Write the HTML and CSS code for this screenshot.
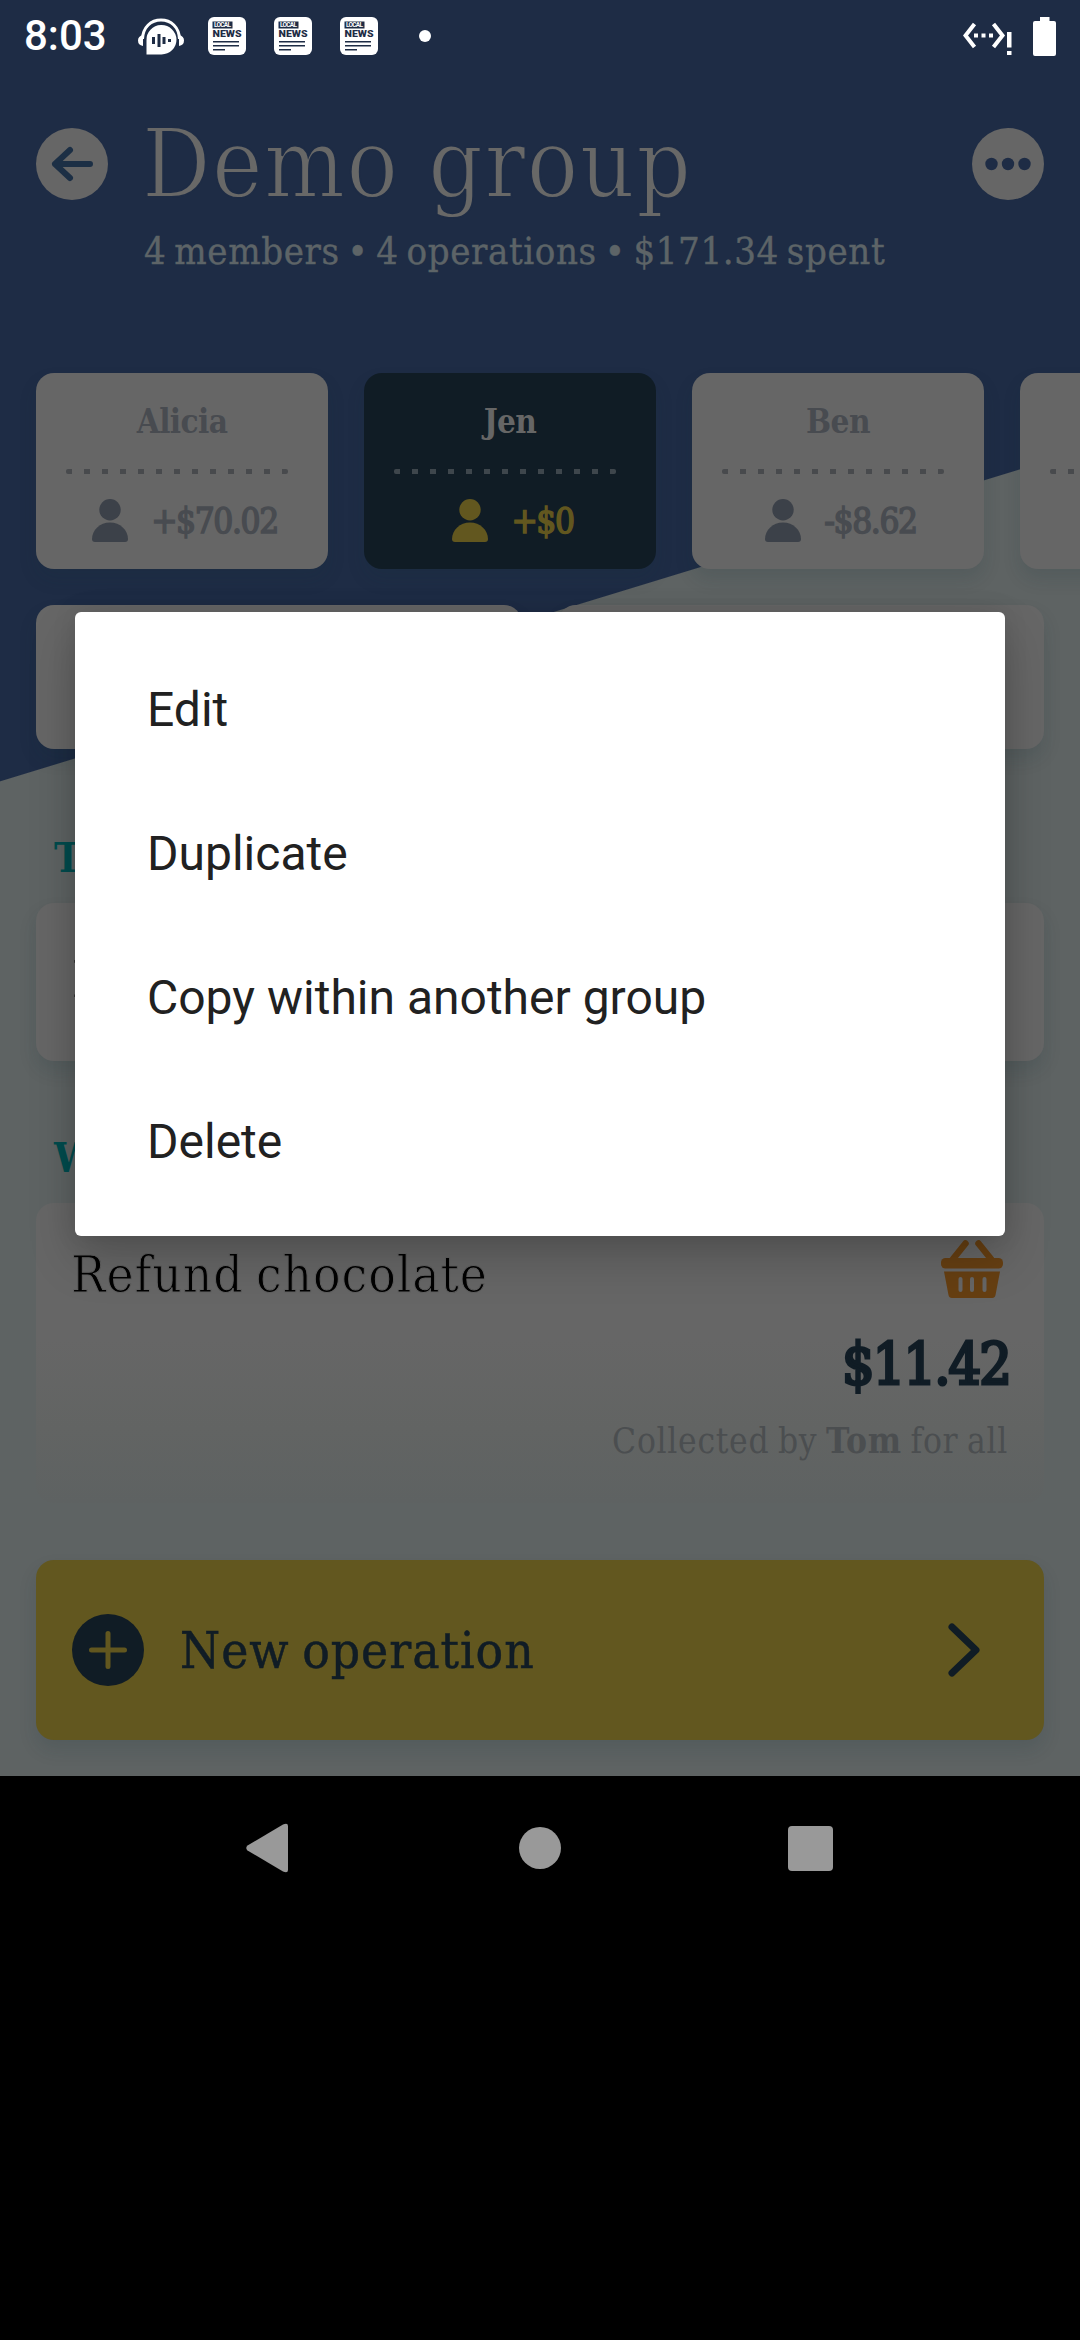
FILE: index.html
```html
<!DOCTYPE html>
<html lang="en">
<head>
<meta charset="utf-8">
<title>Demo group</title>
<link rel="stylesheet" href="styles.css">
</head>
<body>
<svg width="0" height="0" class="defs">
  <symbol id="person" viewBox="0 0 36 43"><circle cx="18" cy="10.700" r="10.700"/><path d="M0 40C0 31 8 23.500 18 23.500S36 31 36 40Q36 43 33 43H3Q0 43 0 40Z"/></symbol>
</svg>
<div class="screen">
  <header class="status">
    <span class="time">8:03</span>
    <svg class="headset" width="46" height="37" viewBox="0 0 46 37">
      <path d="M8.500 36.500V22.500A15 14.700 0 1 1 23.500 36.500Z" fill="#fff"/>
      <path d="M4.500 21C5 9 13 2 23 2S41 9 41.500 21" fill="none" stroke="#fff" stroke-width="3"/>
      <path d="M5 17Q0 18 0 22.500T5 28ZM41 17Q46 18 46 22.500T41 28Z" fill="#fff"/>
      <path d="M15.500 19V26M21 16V29M26 19V26M31.500 21V24" stroke="#1e2c45" stroke-width="3"/>
    </svg>
    <svg class="news" width="38" height="38" viewBox="0 0 38 38">
      <rect width="38" height="38" rx="6" fill="#fff"/><rect x="4.500" y="4.500" width="20" height="7" fill="#1e2c45"/>
      <text x="6" y="10.400" class="news-local" textLength="17">LOCAL</text><text x="4.500" y="20.400" class="news-title" textLength="29" lengthAdjust="spacingAndGlyphs">NEWS</text>
      <path d="M5 24.700H31M5 28.700H31M5 32.700H17" stroke="#1e2c45" stroke-width="1.400"/>
    </svg>
    <svg class="news" width="38" height="38" viewBox="0 0 38 38">
      <rect width="38" height="38" rx="6" fill="#fff"/><rect x="4.500" y="4.500" width="20" height="7" fill="#1e2c45"/>
      <text x="6" y="10.400" class="news-local" textLength="17">LOCAL</text><text x="4.500" y="20.400" class="news-title" textLength="29" lengthAdjust="spacingAndGlyphs">NEWS</text>
      <path d="M5 24.700H31M5 28.700H31M5 32.700H17" stroke="#1e2c45" stroke-width="1.400"/>
    </svg>
    <svg class="news" width="38" height="38" viewBox="0 0 38 38">
      <rect width="38" height="38" rx="6" fill="#fff"/><rect x="4.500" y="4.500" width="20" height="7" fill="#1e2c45"/>
      <text x="6" y="10.400" class="news-local" textLength="17">LOCAL</text><text x="4.500" y="20.400" class="news-title" textLength="29" lengthAdjust="spacingAndGlyphs">NEWS</text>
      <path d="M5 24.700H31M5 28.700H31M5 32.700H17" stroke="#1e2c45" stroke-width="1.400"/>
    </svg>
    <i class="more-dot"></i>
    <svg class="net" width="50" height="34" viewBox="0 0 50 34">
      <path d="M11.500 2L2.500 13.500L11.500 25M30.500 2L39.500 13.500L30.500 25" fill="none" stroke="#fff" stroke-width="4"/>
      <path d="M11 11.500h4v4h-4zM18.500 11.500h4v4h-4zM26 11.500h4v4h-4zM44 10h4.500v15.500H44zM44 29h4.500v4H44z" fill="#fff"/>
    </svg>
    <svg width="23" height="39" viewBox="0 0 23 39"><path d="M7 0H16.500V4H21Q23 4 23 6V37Q23 39 21 39H2Q0 39 0 37V6Q0 4 2 4H7Z" fill="#fff"/></svg>
  </header>

  <div class="heading">
    <svg width="72" height="72" viewBox="0 0 72 72"><circle cx="36" cy="36" r="36" fill="#666"/><path d="M54 36H19M34 22L19 36L34 50" class="stroke arrow"/></svg>
    <div class="heading-text">
      <h1>Demo group</h1>
      <p>4 members • 4 operations • $171.34 spent</p>
    </div>
    <svg width="72" height="72" viewBox="0 0 72 72"><circle cx="36" cy="36" r="36" fill="#666"/><g fill="#1e2c45"><circle cx="19.500" cy="36" r="6.200"/><circle cx="36" cy="36" r="6.200"/><circle cx="52.500" cy="36" r="6.200"/></g></svg>
  </div>

  <div class="members">
    <article class="member"><h2>Alicia</h2><i class="dots"></i><div class="balance"><svg width="36" height="43"><use href="#person"/></svg><span>+$70.02</span></div></article>
    <article class="member active"><h2>Jen</h2><i class="dots"></i><div class="balance"><svg width="36" height="43"><use href="#person"/></svg><span>+$0</span></div></article>
    <article class="member"><h2>Ben</h2><i class="dots"></i><div class="balance"><svg width="36" height="43"><use href="#person"/></svg><span>-$8.62</span></div></article>
    <article class="member"><h2></h2><i class="dots"></i></article>
  </div>

  <div class="actions"><div class="panel"></div><div class="panel"></div></div>

  <h3 class="day first">T</h3>
  <div class="panel operation compact"><span>I</span></div>
  <h3 class="day">W</h3>
  <div class="panel operation fading">
    <div class="op-head"><span>Refund chocolate</span>
      <svg width="62" height="58" viewBox="0 0 62 58">
        <path d="M24.500 3.500L12 19M37.500 3.500L50 19" stroke="#663f12" stroke-width="6.500" stroke-linecap="round"/>
        <rect y="18" width="62" height="10.500" rx="4.500" fill="#663f12"/>
        <path d="M3 31.500H59L54.500 55Q54 58 51 58H11Q8 58 7.500 55Z" fill="#663f12"/>
        <path d="M19.500 39V50M31 39V50M43.500 39V50" stroke="#666" stroke-width="4" stroke-linecap="round"/>
      </svg>
    </div>
    <div class="amount">$11.42</div>
    <div class="payer">Collected by <b>Tom</b> for all</div>
  </div>

  <div class="new-op">
    <svg width="72" height="72" viewBox="0 0 72 72"><circle cx="36" cy="36" r="36" fill="#101c25"/><path d="M36 19.500V52.500M19.500 36H52.500" class="plus"/></svg>
    <span>New operation</span>
    <svg width="32" height="54" viewBox="0 0 32 54"><path d="M4 4L28 27L4 50" class="stroke chevron"/></svg>
  </div>
  <div class="dialog">
    <div>Edit</div><div>Duplicate</div><div>Copy within another group</div><div>Delete</div>
  </div>
</div>
<nav class="nav">
  <svg width="44" height="50" viewBox="0 0 44 50"><path d="M2.500 22.500L38 1.500Q43 -.5 43 3V47Q43 50.500 38 48.500L2.500 27.500Q0 25 2.500 22.500Z" fill="#999"/></svg>
  <i class="home"></i>
  <i class="recent"></i>
</nav>
</body>
</html>
```

FILE: styles.css
```css
* { box-sizing: border-box; margin: 0; }
body { width: 1080px; height: 2340px; background: #000; overflow: hidden; font-family: "Roboto Slab", "DejaVu Serif Condensed", "DejaVu Serif", serif; }
svg { display: block; flex: none; }
.defs { position: absolute; }
.screen {
  position: relative; height: 1776px; display: flex; flex-direction: column; overflow: hidden;
  background: linear-gradient(162.99deg, #1e2c45 0, #1e2c45 746.700px, #5e6363 747.700px);
}

.status { height: 72px; padding: 0 24px; display: flex; align-items: center; color: #fff; }
.time { font: 500 42px/76px Roboto, sans-serif; width: 114px; }
.headset { margin-right: 24px; }
.news { margin-right: 28px; }
.news-local { font: 700 6.500px Roboto, sans-serif; fill: #fff; }
.news-title { font: 900 9.500px Roboto, sans-serif; fill: #1e2c45; }
.more-dot { width: 12px; height: 12px; margin-left: 13px; border-radius: 50%; background: #fff; }
.net { margin: 6px 20px 0 auto; }

.heading { display: flex; padding: 56px 36px 0; height: 301px; }
.heading-text { flex: 1; padding-left: 36px; }
.heading h1 { margin-left: -2px; font-size: 95px; font-weight: 400; line-height: 72px; letter-spacing: 1.500px; color: #686867; white-space: nowrap; -webkit-text-stroke: 1.800px #1e2c45; }
.heading p { margin-top: 31px; font-size: 38px; line-height: 40px; letter-spacing: .6px; word-spacing: -3.500px; color: #5d6467; white-space: nowrap; -webkit-text-stroke: .4px; }
.stroke { fill: none; stroke-linecap: round; stroke-linejoin: round; }
.arrow { stroke: #1c2f45; stroke-width: 6px; }

.members { display: flex; gap: 36px; padding-left: 36px; }
.member { flex: none; width: 292px; height: 196px; padding-top: 29px; border-radius: 18px; background: #666; box-shadow: 0 10px 18px rgba(20,50,60,.14); text-align: center; color: #484b50; }
.member h2 { height: 40px; font-size: 33px; line-height: 40px; letter-spacing: -.6px; }
.dots { display: block; height: 5px; margin: 27px 30px 25px; width: 222px; background: repeating-linear-gradient(90deg, #484a4d 0 6px, transparent 6px 18px); border-radius: 2px; }
.balance { display: flex; justify-content: center; align-items: center; gap: 23px; height: 43px; padding-left: 6px; font-size: 35px; letter-spacing: -1.400px; -webkit-text-stroke: 1.500px; fill: #3c4149; }
.active { background: #101c25; }
.active h2 { color: #666; }
.active .dots { background: repeating-linear-gradient(90deg, #3e464c 0 6px, transparent 6px 18px); }
.active .balance { color: #62571f; fill: #62571f; }

.panel { border-radius: 18px; background: #666; box-shadow: 0 10px 18px rgba(20,50,60,.14); }
.actions { display: grid; grid-template-columns: 1fr 1fr; gap: 36px; padding: 36px 36px 0; height: 180px; }
.day { margin: 73px 54px 21px; height: 48px; font-size: 41px; line-height: 48px; color: #004c4e; }
.day.first { margin-top: 85px; }
.operation { margin: 0 36px; padding: 36px; }
.compact { height: 158px; font-size: 51px; line-height: 82px; color: #000; }
.fading { height: 300px; background: linear-gradient(#666 45%, #626463 75%, #5e6262); box-shadow: none; }
.op-head { display: flex; justify-content: space-between; height: 72px; font-size: 51px; line-height: 72px; letter-spacing: .9px; word-spacing: -3px; color: #000; -webkit-text-stroke: 1px #616161; }
.op-head span { margin-left: -1px; }
.op-head svg { margin: 1px 5px 0 0; }
.amount { margin: 17px -2px 0 0; text-align: right; font-size: 57px; line-height: 72px; letter-spacing: -1.900px; color: #101c25; -webkit-text-stroke: 3px; }
.payer { margin-top: 19px; text-align: right; font-size: 35px; line-height: 44px; letter-spacing: .7px; word-spacing: -2px; color: #4b4e50; }

.new-op { margin: 57px 36px 0; height: 180px; padding: 0 64px 0 36px; display: flex; align-items: center; border-radius: 18px; background: #62571f; box-shadow: 0 10px 18px rgba(20,50,60,.14); color: #101c25; }
.new-op span { flex: 1; padding: 2px 0 0 36px; font-size: 51px; line-height: 72px; letter-spacing: 1px; word-spacing: -3px; -webkit-text-stroke: .5px; }
.plus { stroke: #62571f; stroke-width: 5px; stroke-linecap: round; }
.chevron { stroke: #101c25; stroke-width: 7px; }

.dialog { position: absolute; left: 75px; top: 612px; width: 930px; height: 624px; padding: 26px 72px 22px; border-radius: 6px; background: #fff; box-shadow: 0 22px 48px rgba(0,0,0,.2), 0 0 24px rgba(0,0,0,.1); font: 48px/144px Roboto, sans-serif; color: #212121; }

.nav { height: 144px; padding: 0 247px 0 245px; display: flex; align-items: center; justify-content: space-between; }
.home { width: 42px; height: 42px; margin-left: 3px; border-radius: 50%; background: #999; }
.recent { width: 45px; height: 45px; border-radius: 4px; background: #999; }
```
